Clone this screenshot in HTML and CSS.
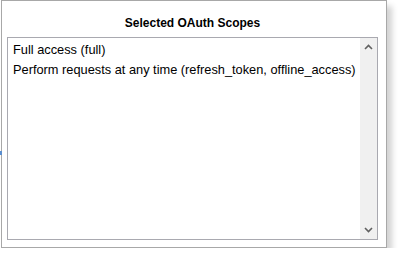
FILE: index.html
```html
<!DOCTYPE html>
<html lang="en">
<head>
    <meta charset="UTF-8">
    <title>Selected OAuth Scopes</title>
    <link rel="stylesheet" href="styles.css">
</head>
<body>

    <div class="panel">
        <h2 class="panel-title">Selected OAuth Scopes</h2>
        <div class="listbox">
            <ul class="scope-list">
                <li>Full access (full)</li>
                <li>Perform requests at any time (refresh_token, offline_access)</li>
            </ul>
            <!-- Scrollbar im Windows-Stil -->
            <div class="scrollbar">
                <svg class="arrow" viewBox="0 0 9 6" width="9" height="6">
                    <path d="M1 5L4.5 1.5L8 5" fill="none" stroke="#606060" stroke-width="1.6"/>
                </svg>
                <svg class="arrow" viewBox="0 0 9 6" width="9" height="6">
                    <path d="M1 1L4.5 4.5L8 1" fill="none" stroke="#606060" stroke-width="1.6"/>
                </svg>
            </div>
        </div>
        <!-- kleiner Rest vom Nachbarfenster am linken Rand -->
        <span class="edge-mark"></span>
    </div>

</body>
</html>
```

FILE: styles.css
```css
body {
    margin: 0;
    background-color: #ffffff;
    font-family: "Liberation Sans", Arial, sans-serif;
    color: #000000;
}

/* Fenster mit Schatten */
.panel {
    position: relative;
    box-sizing: border-box;
    width: 386px;
    height: 248px;
    margin-left: 1px;
    padding: 15px 0 0 5px;
    border: 1px solid #a8a8a8;
    background-color: #ffffff;
    box-shadow: 5px 6px 6px rgba(0, 0, 0, 0.18);
}

.panel-title {
    margin: 0 0 7px 0;
    width: 371px;
    font-size: 12px;
    font-weight: bold;
    line-height: 14px;
    text-align: center;
}

/* Die Liste */
.listbox {
    box-sizing: border-box;
    display: flex;
    width: 371px;
    height: 203px;
    border: 1px solid #a9a9b0;
}

.scope-list {
    flex: 1;
    margin: 0;
    padding: 2px 0 0 5px;
    list-style: none;
    font-size: 12.8px;
    line-height: 20px;
}

.scrollbar {
    width: 17px;
    background-color: #f0f0f0;
    display: flex;
    flex-direction: column;
    justify-content: space-between;
    align-items: center;
    padding: 6px 0 6px 0;
}

.edge-mark {
    position: absolute;
    left: -2px;
    top: 150px;
    width: 2px;
    height: 4px;
    background-color: #5b8fd0;
}
```
